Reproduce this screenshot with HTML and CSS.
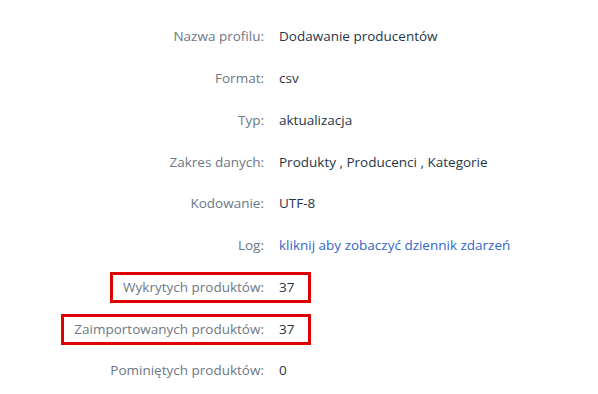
FILE: index.html
```html
<!DOCTYPE html>
<html lang="pl">
<head>
  <meta charset="UTF-8" />
  <title>Szczegóły importu</title>
  <link rel="stylesheet" href="styles.css">
</head>
<body>
  <div class="details">
    <div class="row"><div class="label"><span>Nazwa profilu:</span></div><div class="value"><span>Dodawanie producentów</span></div></div>
    <div class="row"><div class="label"><span>Format:</span></div><div class="value"><span>csv</span></div></div>
    <div class="row"><div class="label"><span>Typ:</span></div><div class="value"><span>aktualizacja</span></div></div>
    <div class="row"><div class="label"><span>Zakres danych:</span></div><div class="value"><span>Produkty , Producenci , Kategorie</span></div></div>
    <div class="row"><div class="label"><span>Kodowanie:</span></div><div class="value"><span>UTF-8</span></div></div>
    <div class="row"><div class="label"><span>Log:</span></div><div class="value"><a href="#">kliknij aby zobaczyć dziennik zdarzeń</a></div></div>
    <div class="row marked"><div class="label"><span>Wykrytych produktów:</span></div><div class="value"><span>37</span></div></div>
    <div class="row marked"><div class="label"><span>Zaimportowanych produktów:</span></div><div class="value"><span>37</span></div></div>
    <div class="row"><div class="label"><span>Pominiętych produktów:</span></div><div class="value"><span>0</span></div></div>
  </div>
</body>
</html>
```

FILE: styles.css
```css
body { margin: 0; background: #fff; font-family: "Open Sans", sans-serif; font-size: 13.5px; }
.details { padding-top: 16px; }
.row { display: grid; grid-template-columns: 279px 1fr; height: 41.75px; align-items: center; }
.label { text-align: right; color: #6b7886; }
.label span, .value span, .value a { display: inline-block; line-height: 25px; border: 3px solid transparent; }
.label span { padding-right: 15px; border-right: 0; }
.value span, .value a { border-left: 0; border-right: 0; }
.value { color: #263648; }
.value a { color: #3666c6; text-decoration: none; }
.marked .label span { border-color: #e10000; border-right: 0; padding-left: 10px; }
.marked .value span { border-color: #e10000; border-left: 0; border-right: 3px solid #e10000; padding-right: 14px; }
```
